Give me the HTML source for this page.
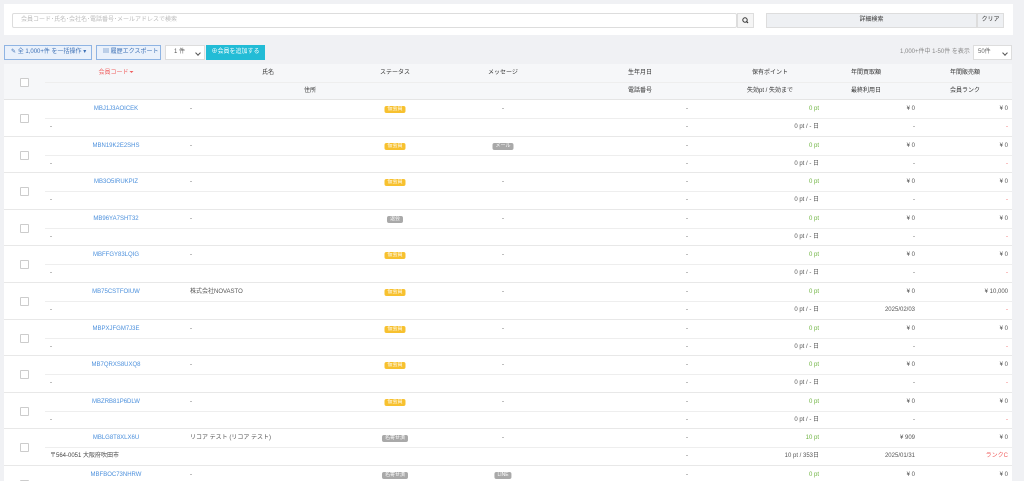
<!DOCTYPE html>
<html><head><meta charset="utf-8"><style>
*{box-sizing:border-box;margin:0;padding:0}
html,body{width:1024px;height:481px;overflow:hidden}
body{background:#f0f1f4;font-family:"Liberation Sans","Noto Sans CJK JP",sans-serif;font-size:6px;line-height:7px;color:#555;position:relative}
.a{position:absolute;white-space:nowrap;line-height:7px}
.top{position:absolute;left:4px;top:4px;width:1009px;height:31px;background:#fff}
.inp{position:absolute;left:12px;top:13px;width:725px;height:15px;border:1px solid #ddd;border-radius:2px;background:#fff;color:#bbb;padding:3px 8px;line-height:7px}
.sb{position:absolute;left:737px;top:13px;width:17px;height:15px;border:1px solid #ddd;background:#f5f5f5}
.det{position:absolute;left:766px;top:13px;width:211px;height:15px;border:1px solid #ddd;background:#eef0f3;text-align:center;line-height:13px;color:#333}
.clr{position:absolute;left:977px;top:13px;width:27px;height:15px;border:1px solid #ddd;background:#eef0f3;text-align:center;line-height:13px;color:#333}
.btn{position:absolute;top:45px;height:15px;border:1px solid #8fb4e3;background:#eaf1fb;color:#3b6fb5;line-height:13px;padding-left:6px;white-space:nowrap;overflow:hidden}
.tbl{position:absolute;left:4px;top:64px;width:1008px;height:420px;background:#fff}
.hd{position:absolute;left:0;top:0;width:1008px;height:36px;background:#f6f7f9;border-bottom:1px solid #e5e5e5}
.row{position:absolute;left:0;width:1008px;height:36.6px;border-bottom:1px solid #e8e8e8}
.mid{position:absolute;left:41px;right:0;top:18px;border-top:1px solid #eee}
.cb{position:absolute;left:16px;width:9px;height:9px;border:1px solid #ccc;background:#fff;border-radius:1px}
.c{transform:translateX(-50%)}
.r{transform:translateX(-100%)}
.lk{color:#4a8fdc}
.g{color:#6db33f}
.bd{padding:0 3px;border-radius:2px;color:#fff;font-size:5px;line-height:7px}
.y{background:#f7c12f}.gr{background:#a9a9a9}
.red{color:#f06060}
.tri{display:inline-block;width:0;height:0;border-left:2px solid transparent;border-right:2px solid transparent;border-top:2px solid #f06060;vertical-align:middle;margin-left:1px}
.dd{position:absolute;right:4px;top:5px;width:4px;height:4px;border-right:1px solid #555;border-bottom:1px solid #555;transform:rotate(45deg)}
</style></head><body>
<div class="top"></div>
<div class="inp">会員コード･氏名･会社名･電話番号･メールアドレスで検索</div>
<div class="sb"><svg width="15" height="13" viewBox="0 0 15 13"><circle cx="7" cy="6" r="2.2" fill="none" stroke="#333" stroke-width="1"/><line x1="8.6" y1="7.6" x2="10" y2="9" stroke="#333" stroke-width="1.2"/></svg></div>
<div class="det">詳細検索</div><div class="clr">クリア</div>
<div class="btn" style="left:4px;width:88px">✎ 全 1,000+件 を一括操作 ▾</div>
<div class="btn" style="left:96px;width:65px">▤ 履歴エクスポート ▾</div>
<div class="a" style="left:165px;top:45px;width:40px;height:15px;background:#fff;border:1px solid #ddd;padding:3px 8px">1 件<span class="dd"></span></div>
<div class="a" style="left:206px;top:45px;width:59px;height:15px;background:#22bcd6;color:#fff;text-align:center;line-height:15px">⊕会員を追加する</div>
<div class="a" style="left:900px;top:49px;color:#888">1,000+件中 1-50件 を表示</div>
<div class="a" style="left:973px;top:45px;width:39px;height:15px;background:#fff;border:1px solid #ddd;padding:3px 4px;color:#666">50件<span class="dd"></span></div>
<div class="tbl">
<div class="hd">
<div class="mid"></div>
<div class="cb" style="top:14px"></div>
<span class="a c red" style="left:112px;top:6px">会員コード<span class="tri"></span></span>
<span class="a c" style="left:264px;top:6px;color:#333">氏名</span>
<span class="a c" style="left:391px;top:6px;color:#333">ステータス</span>
<span class="a c" style="left:499px;top:6px;color:#333">メッセージ</span>
<span class="a c" style="left:636px;top:6px;color:#333">生年月日</span>
<span class="a c" style="left:766px;top:6px;color:#333">保有ポイント</span>
<span class="a c" style="left:862px;top:6px;color:#333">年間買取額</span>
<span class="a c" style="left:961px;top:6px;color:#333">年間販売額</span>
<span class="a c" style="left:306px;top:24px;color:#333">住所</span>
<span class="a c" style="left:636px;top:24px;color:#333">電話番号</span>
<span class="a c" style="left:766px;top:24px;color:#333">失効pt / 失効まで</span>
<span class="a c" style="left:862px;top:24px;color:#333">最終利用日</span>
<span class="a c" style="left:961px;top:24px;color:#333">会員ランク</span>
</div>

<div class="row" style="top:36px"><div class="mid"></div><div class="cb" style="top:14px"></div>
<span class="a c lk" style="left:112px;top:6px">MBJ1J3AOICEK</span><span class="a" style="left:186px;top:6px">-</span>
<span class="a c bd y" style="left:391px;top:6px">仮会員</span><span class="a c" style="left:499px;top:6px">-</span>
<span class="a" style="left:682px;top:6px">-</span><span class="a r g" style="left:815px;top:6px">0 pt</span><span class="a r" style="left:911px;top:6px">¥ 0</span><span class="a r" style="left:1004px;top:6px">¥ 0</span>
<span class="a" style="left:46px;top:24px">-</span><span class="a" style="left:682px;top:24px">-</span><span class="a r" style="left:815px;top:24px">0 pt / - 日</span><span class="a r" style="left:911px;top:24px">-</span><span class="a r red" style="left:1004px;top:24px">-</span></div>

<div class="row" style="top:72.6px"><div class="mid"></div><div class="cb" style="top:14px"></div>
<span class="a c lk" style="left:112px;top:6px">MBN19K2E2SHS</span><span class="a" style="left:186px;top:6px">-</span>
<span class="a c bd y" style="left:391px;top:6px">仮会員</span><span class="a c bd gr" style="left:499px;top:6px">メール</span>
<span class="a" style="left:682px;top:6px">-</span><span class="a r g" style="left:815px;top:6px">0 pt</span><span class="a r" style="left:911px;top:6px">¥ 0</span><span class="a r" style="left:1004px;top:6px">¥ 0</span>
<span class="a" style="left:46px;top:24px">-</span><span class="a" style="left:682px;top:24px">-</span><span class="a r" style="left:815px;top:24px">0 pt / - 日</span><span class="a r" style="left:911px;top:24px">-</span><span class="a r red" style="left:1004px;top:24px">-</span></div>

<div class="row" style="top:109.2px"><div class="mid"></div><div class="cb" style="top:14px"></div>
<span class="a c lk" style="left:112px;top:6px">MB3O5IRUKPIZ</span><span class="a" style="left:186px;top:6px">-</span>
<span class="a c bd y" style="left:391px;top:6px">仮会員</span><span class="a c" style="left:499px;top:6px">-</span>
<span class="a" style="left:682px;top:6px">-</span><span class="a r g" style="left:815px;top:6px">0 pt</span><span class="a r" style="left:911px;top:6px">¥ 0</span><span class="a r" style="left:1004px;top:6px">¥ 0</span>
<span class="a" style="left:46px;top:24px">-</span><span class="a" style="left:682px;top:24px">-</span><span class="a r" style="left:815px;top:24px">0 pt / - 日</span><span class="a r" style="left:911px;top:24px">-</span><span class="a r red" style="left:1004px;top:24px">-</span></div>

<div class="row" style="top:145.8px"><div class="mid"></div><div class="cb" style="top:14px"></div>
<span class="a c lk" style="left:112px;top:6px">MB96YA7SHT32</span><span class="a" style="left:186px;top:6px">-</span>
<span class="a c bd gr" style="left:391px;top:6px">退会</span><span class="a c" style="left:499px;top:6px">-</span>
<span class="a" style="left:682px;top:6px">-</span><span class="a r g" style="left:815px;top:6px">0 pt</span><span class="a r" style="left:911px;top:6px">¥ 0</span><span class="a r" style="left:1004px;top:6px">¥ 0</span>
<span class="a" style="left:46px;top:24px">-</span><span class="a" style="left:682px;top:24px">-</span><span class="a r" style="left:815px;top:24px">0 pt / - 日</span><span class="a r" style="left:911px;top:24px">-</span><span class="a r red" style="left:1004px;top:24px">-</span></div>

<div class="row" style="top:182.4px"><div class="mid"></div><div class="cb" style="top:14px"></div>
<span class="a c lk" style="left:112px;top:6px">MBFFGY83LQIG</span><span class="a" style="left:186px;top:6px">-</span>
<span class="a c bd y" style="left:391px;top:6px">仮会員</span><span class="a c" style="left:499px;top:6px">-</span>
<span class="a" style="left:682px;top:6px">-</span><span class="a r g" style="left:815px;top:6px">0 pt</span><span class="a r" style="left:911px;top:6px">¥ 0</span><span class="a r" style="left:1004px;top:6px">¥ 0</span>
<span class="a" style="left:46px;top:24px">-</span><span class="a" style="left:682px;top:24px">-</span><span class="a r" style="left:815px;top:24px">0 pt / - 日</span><span class="a r" style="left:911px;top:24px">-</span><span class="a r red" style="left:1004px;top:24px">-</span></div>

<div class="row" style="top:219px"><div class="mid"></div><div class="cb" style="top:14px"></div>
<span class="a c lk" style="left:112px;top:6px">MB75CSTFOIUW</span><span class="a" style="left:186px;top:6px">株式会社NOVASTO</span>
<span class="a c bd y" style="left:391px;top:6px">仮会員</span><span class="a c" style="left:499px;top:6px">-</span>
<span class="a" style="left:682px;top:6px">-</span><span class="a r g" style="left:815px;top:6px">0 pt</span><span class="a r" style="left:911px;top:6px">¥ 0</span><span class="a r" style="left:1004px;top:6px">¥ 10,000</span>
<span class="a" style="left:46px;top:24px">-</span><span class="a" style="left:682px;top:24px">-</span><span class="a r" style="left:815px;top:24px">0 pt / - 日</span><span class="a r" style="left:911px;top:24px">2025/02/03</span><span class="a r red" style="left:1004px;top:24px">-</span></div>

<div class="row" style="top:255.6px"><div class="mid"></div><div class="cb" style="top:14px"></div>
<span class="a c lk" style="left:112px;top:6px">MBPXJFGM7J3E</span><span class="a" style="left:186px;top:6px">-</span>
<span class="a c bd y" style="left:391px;top:6px">仮会員</span><span class="a c" style="left:499px;top:6px">-</span>
<span class="a" style="left:682px;top:6px">-</span><span class="a r g" style="left:815px;top:6px">0 pt</span><span class="a r" style="left:911px;top:6px">¥ 0</span><span class="a r" style="left:1004px;top:6px">¥ 0</span>
<span class="a" style="left:46px;top:24px">-</span><span class="a" style="left:682px;top:24px">-</span><span class="a r" style="left:815px;top:24px">0 pt / - 日</span><span class="a r" style="left:911px;top:24px">-</span><span class="a r red" style="left:1004px;top:24px">-</span></div>

<div class="row" style="top:292.2px"><div class="mid"></div><div class="cb" style="top:14px"></div>
<span class="a c lk" style="left:112px;top:6px">MB7QRXS8UXQ8</span><span class="a" style="left:186px;top:6px">-</span>
<span class="a c bd y" style="left:391px;top:6px">仮会員</span><span class="a c" style="left:499px;top:6px">-</span>
<span class="a" style="left:682px;top:6px">-</span><span class="a r g" style="left:815px;top:6px">0 pt</span><span class="a r" style="left:911px;top:6px">¥ 0</span><span class="a r" style="left:1004px;top:6px">¥ 0</span>
<span class="a" style="left:46px;top:24px">-</span><span class="a" style="left:682px;top:24px">-</span><span class="a r" style="left:815px;top:24px">0 pt / - 日</span><span class="a r" style="left:911px;top:24px">-</span><span class="a r red" style="left:1004px;top:24px">-</span></div>

<div class="row" style="top:328.8px"><div class="mid"></div><div class="cb" style="top:14px"></div>
<span class="a c lk" style="left:112px;top:6px">MBZRB81P6DLW</span><span class="a" style="left:186px;top:6px">-</span>
<span class="a c bd y" style="left:391px;top:6px">仮会員</span><span class="a c" style="left:499px;top:6px">-</span>
<span class="a" style="left:682px;top:6px">-</span><span class="a r g" style="left:815px;top:6px">0 pt</span><span class="a r" style="left:911px;top:6px">¥ 0</span><span class="a r" style="left:1004px;top:6px">¥ 0</span>
<span class="a" style="left:46px;top:24px">-</span><span class="a" style="left:682px;top:24px">-</span><span class="a r" style="left:815px;top:24px">0 pt / - 日</span><span class="a r" style="left:911px;top:24px">-</span><span class="a r red" style="left:1004px;top:24px">-</span></div>

<div class="row" style="top:365.4px"><div class="mid"></div><div class="cb" style="top:14px"></div>
<span class="a c lk" style="left:112px;top:6px">MBLG8T8XLX6U</span><span class="a" style="left:186px;top:6px">リコア テスト (リコア テスト)</span>
<span class="a c bd gr" style="left:391px;top:6px">名寄せ済</span><span class="a c" style="left:499px;top:6px">-</span>
<span class="a" style="left:682px;top:6px">-</span><span class="a r g" style="left:815px;top:6px">10 pt</span><span class="a r" style="left:911px;top:6px">¥ 909</span><span class="a r" style="left:1004px;top:6px">¥ 0</span>
<span class="a" style="left:46px;top:24px;color:#444">〒564-0051 大阪府吹田市</span><span class="a" style="left:682px;top:24px">-</span><span class="a r" style="left:815px;top:24px">10 pt / 353日</span><span class="a r" style="left:911px;top:24px">2025/01/31</span><span class="a r red" style="left:1004px;top:24px">ランクC</span></div>

<div class="row" style="top:402px"><div class="mid"></div><div class="cb" style="top:14px"></div>
<span class="a c lk" style="left:112px;top:6px">MBFBOC73NHRW</span><span class="a" style="left:186px;top:6px">-</span>
<span class="a c bd gr" style="left:391px;top:6px">名寄せ済</span><span class="a c bd gr" style="left:499px;top:6px">LINE</span>
<span class="a" style="left:682px;top:6px">-</span><span class="a r g" style="left:815px;top:6px">0 pt</span><span class="a r" style="left:911px;top:6px">¥ 0</span><span class="a r" style="left:1004px;top:6px">¥ 0</span></div>
</div>
</body></html>
